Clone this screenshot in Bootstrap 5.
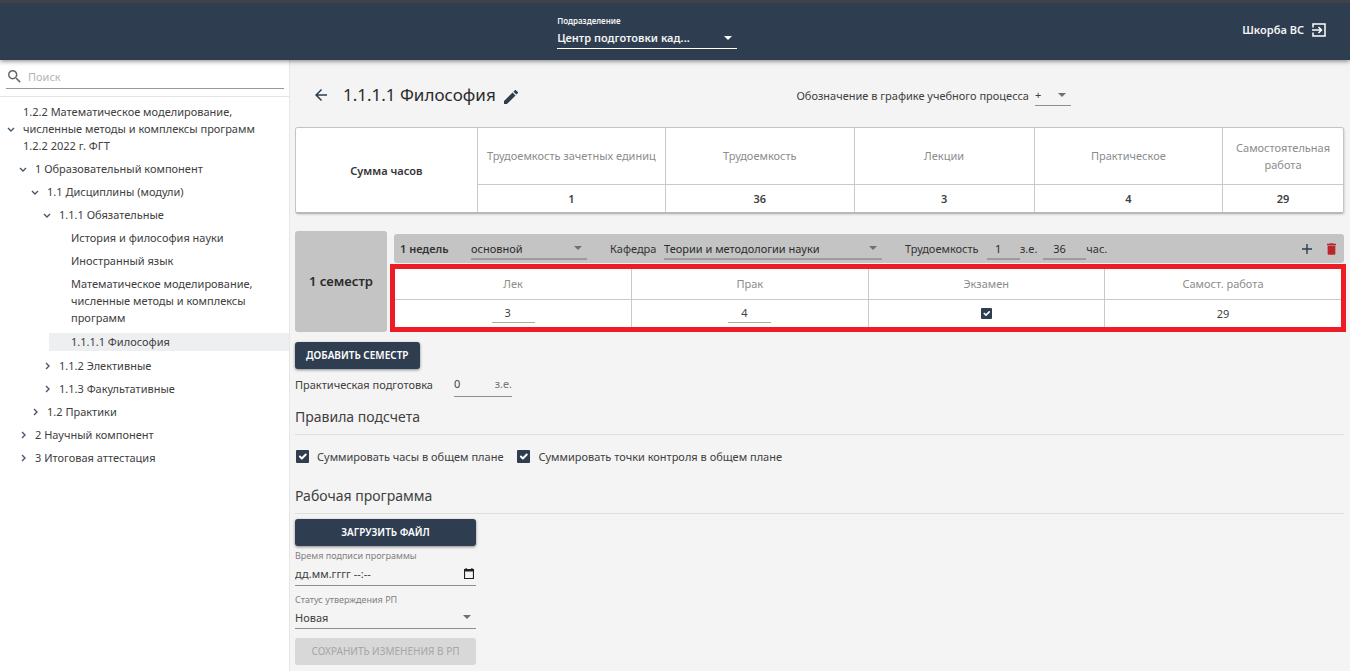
<!DOCTYPE html>
<html lang="ru">
<head>
<meta charset="utf-8">
<meta name="viewport" content="width=device-width, initial-scale=1">
<title>1.1.1.1 Философия</title>
<link href="https://cdn.jsdelivr.net/npm/bootstrap@5.3.0/dist/css/bootstrap.min.css" rel="stylesheet">
<style>
:root{--navy:#2e3e50;--ink:#404040;--rule:#c9c9c9}
body{font-family:"Noto Sans","Open Sans",sans-serif;font-size:11px;line-height:17px;color:var(--ink);background:#f4f4f4}
svg{display:block;fill:currentColor}
.topbar{display:grid;grid-template-columns:10fr 180px 11fr;height:60px;background:var(--navy);border-top:3px solid #404246;color:#f4f4f4;box-shadow:0 1px 5px rgba(0,0,0,.5);position:relative;z-index:2;font-weight:600}
.tiny-label{font-size:9px;line-height:12px;display:block}
.topbar .tiny-label{font-size:8px}
.line-field{border:0;border-bottom:1px solid #8f8f8f;border-radius:0;background-color:transparent;color:inherit;font:inherit;padding:0;outline:0;display:block;min-width:0}
select.line-field{appearance:none;background-repeat:no-repeat;background-position:right 5px center;background-size:8px 4px;background-image:url("data:image/svg+xml,%3Csvg xmlns='http://www.w3.org/2000/svg' viewBox='0 0 8 4'%3E%3Cpath fill='%23707070' d='M0 0h8L4 4z'/%3E%3C/svg%3E")}
.topbar select.line-field{border-color:#fff;height:22px;background-image:url("data:image/svg+xml,%3Csvg xmlns='http://www.w3.org/2000/svg' viewBox='0 0 8 4'%3E%3Cpath fill='white' d='M0 0h8L4 4z'/%3E%3C/svg%3E")}
.topbar option{color:#333}
.shell{min-height:calc(100vh - 60px)}
.side{width:290px;background:#fff;border-right:1px solid #e6e6e6;flex-shrink:0}
.search{height:37px;border-bottom:1px solid #e4e4e4;padding:5px 5px 0 6px}
.search-line{border-bottom:1px solid #999;height:24px;color:#666;padding-left:2px}
.search input{margin-left:7px}
.search input::placeholder{color:#b5b5b5;opacity:1}
.tree ul{list-style:none;margin:0;padding:0 0 0 12px}
.tree>ul{padding:0 0 0 5px}
.node{display:flex;align-items:center;padding:3px 0;color:var(--ink);text-decoration:none}
.node svg{width:12px;height:12px;margin-right:6px;flex-shrink:0;color:#44566a;fill:none;stroke:currentColor;stroke-width:1.4}
.tree>ul>li>.node{padding-top:6px}
.tree .leaves{padding-left:8px}
.tree .leaves .leaf{padding-left:22px;padding-right:20px}
.tree .leaves .current{background:#eeeff1;padding-top:0;padding-bottom:0;margin:4px 0 3px;line-height:18px}
.work{padding:23px 6px 6px 5px;min-width:0}
.title-row{margin-bottom:20px}
.page-title{font-size:17px;line-height:24px;margin:0;font-weight:400;color:#2b2b2b}
.plain{border:0;background:none;padding:0;color:var(--navy)}
.mark-field{padding-right:273px}
.mark-field .line-field{width:36px;height:21px;margin-left:6px}
.grid-table{width:100%;table-layout:fixed;background:#fff;text-align:center;margin:0}
.grid-table th,.grid-table td{border-left:1px solid var(--rule);padding:0 6px;font-weight:400}
.grid-table thead th:not(.lead-cell){color:#8c8c8c;border-bottom:1px solid var(--rule)}
.grid-table tr>:first-child.edge,.grid-table .lead-cell{border-left:0}
.sum{border:1px solid #c4c4c4;border-bottom:2px solid #b9b9b9;border-radius:3px;overflow:hidden;box-shadow:1px 1px 2px rgba(0,0,0,.12)}
.sum thead th{height:56px}
.sum thead td{height:28px;font-weight:600}
.sum .lead-cell{font-weight:600;color:#333}
.sem-row{margin-top:17px}
.sem-name{width:92px;background:#c4c4c4;border-radius:3px;font-size:13px;font-weight:600;color:#2b2b2b;margin-right:7px;flex-shrink:0}
.sem-body{padding-top:3px;min-width:0}
.sem-bar{background:#c4c4c4;height:29px;border-radius:3px;color:#333}
.sem-bar .line-field{height:23px;border-bottom:2px solid #9c9c9c;color:#2b2b2b;padding-top:1px}
.weeks{padding-left:6px;width:77px}
.kind{width:116px}
.dept-label{margin-left:23px;width:54px}
.dept{width:218px}
.work-label{margin-left:23px;width:82px}
.sem-bar .ze{width:33px;padding-left:8px}
.sem-bar .hours{width:43px;padding-left:10px;margin-left:6px}
.trash{margin:0 8px 0 15px}
.marked{border:5px solid #ed1c24;margin:1px -2px 0 -4px}
.marked thead th{height:30px}
.marked td{height:28px;padding:0}
.cell-in{width:43px;height:20px;padding-left:13px;border-color:#aaa}
.form-check-input.tick{width:11px;height:11px;margin:0;border:0;border-radius:1px;float:none;display:block;box-shadow:none}
.form-check-input.tick:checked{background-color:var(--navy)}
.form-check-input.big{width:13px;height:13px}
.act{background:var(--navy);color:#fff;border:0;border-radius:3px;height:27px;font:inherit;font-size:10px;font-weight:600;text-transform:uppercase;padding:0 11px;box-shadow:0 1px 3px rgba(0,0,0,.45)}
.act:disabled{background:#d8d8d8;color:#a6a6a6;box-shadow:none;font-weight:400}
.add{margin-top:10px}
.prep{height:30px}
.prep>label{width:159px}
.prep-box{width:58px;height:26px;border-bottom:1px solid #8f8f8f}
.prep-box input{width:30px}
.prep-box span{color:#777}
.sect{font-size:14px;line-height:20px;font-weight:400;margin:0;padding-bottom:7px;border-bottom:1px solid #dedede}
.checks{padding:13px 0 21px 1px;gap:14px}
.checks label{margin-left:8px}
.prog{width:181px}
.prog .tiny-label{color:#808080}
.load{margin-top:5px}
.date-line{height:24px;border-bottom:1px solid #8f8f8f;padding-right:2px}
.state{height:23px}
.save{margin-top:9px}
</style>
</head>
<body>
<header class="topbar">
  <div></div>
  <div class="pt-2">
    <label class="tiny-label pt-1" for="unit">Подразделение</label>
    <select id="unit" class="line-field w-100 pe-4"><option>Центр подготовки кад...</option></select>
  </div>
  <div class="d-flex align-items-center justify-content-end pe-4 gap-2 pb-1">
    <span>Шкорба ВС</span>
    <button class="plain text-white" aria-label="Выйти"><svg width="14" height="14" viewBox="0 0 14 14" stroke="#fff" stroke-width="1.5" style="fill:none"><path d="M1 4.500V1h12v12H1V9.500M0 7h9M6.500 4 9.500 7l-3 3"/></svg></button>
  </div>
</header>
<div class="d-flex align-items-stretch shell">
  <aside class="side">
    <div class="search">
      <div class="search-line d-flex align-items-center">
        <svg width="13" height="13" viewBox="3 3 18 18"><path d="M15.500 14h-.79l-.28-.27A6.470 6.470 0 0 0 16 9.500 6.500 6.500 0 1 0 9.500 16c1.610 0 3.090-.59 4.230-1.570l.27.28v.79l5 4.990L20.490 19zm-6 0C7.010 14 5 11.990 5 9.500S7.010 5 9.500 5 14 7.010 14 9.500 11.990 14 9.500 14"/></svg>
        <input class="line-field border-0 flex-grow-1" type="search" placeholder="Поиск" aria-label="Поиск">
      </div>
    </div>
    <nav class="tree"><ul>
      <li><a href="#" class="node"><svg viewBox="0 0 12 12"><path d="M3 5l3 3 3-3"/></svg><span>1.2.2 Математическое моделирование,<br>численные методы и комплексы программ<br>1.2.2 2022 г. ФГТ</span></a>
      <ul>
        <li><a href="#" class="node"><svg viewBox="0 0 12 12"><path d="M3 5l3 3 3-3"/></svg>1 Образовательный компонент</a>
        <ul>
          <li><a href="#" class="node"><svg viewBox="0 0 12 12"><path d="M3 5l3 3 3-3"/></svg>1.1 Дисциплины (модули)</a>
          <ul>
            <li><a href="#" class="node"><svg viewBox="0 0 12 12"><path d="M3 5l3 3 3-3"/></svg>1.1.1 Обязательные</a>
            <ul class="leaves">
              <li><a href="#" class="node leaf">История и философия науки</a></li>
              <li><a href="#" class="node leaf">Иностранный язык</a></li>
              <li><a href="#" class="node leaf">Математическое моделирование, численные методы и комплексы программ</a></li>
              <li><a href="#" class="node leaf current">1.1.1.1 Философия</a></li>
            </ul></li>
            <li><a href="#" class="node"><svg viewBox="0 0 12 12"><path d="M5 3l3 3-3 3"/></svg>1.1.2 Элективные</a></li>
            <li><a href="#" class="node"><svg viewBox="0 0 12 12"><path d="M5 3l3 3-3 3"/></svg>1.1.3 Факультативные</a></li>
          </ul></li>
          <li><a href="#" class="node"><svg viewBox="0 0 12 12"><path d="M5 3l3 3-3 3"/></svg>1.2 Практики</a></li>
        </ul></li>
        <li><a href="#" class="node"><svg viewBox="0 0 12 12"><path d="M5 3l3 3-3 3"/></svg>2 Научный компонент</a></li>
        <li><a href="#" class="node"><svg viewBox="0 0 12 12"><path d="M5 3l3 3-3 3"/></svg>3 Итоговая аттестация</a></li>
      </ul></li>
    </ul></nav>
  </aside>
  <main class="work flex-grow-1">
    <div class="row g-0 align-items-center title-row">
      <div class="col d-flex align-items-center ps-3">
        <button class="plain ms-1" aria-label="Назад"><svg width="12" height="12" viewBox="4 4 16 16"><path d="M20 11H7.830l5.590-5.590L12 4l-8 8 8 8 1.410-1.410L7.830 13H20z"/></svg></button>
        <h1 class="page-title ms-3">1.1.1.1 Философия</h1>
        <button class="plain ms-2 pe-1 pt-1" aria-label="Изменить"><svg width="14" height="14" viewBox="3 3 18 18"><path d="M3 17.250V21h3.750L17.810 9.940l-3.750-3.750zM20.710 7.040a1 1 0 0 0 0-1.410l-2.340-2.340a1 1 0 0 0-1.410 0l-1.830 1.830 3.750 3.750z"/></svg></button>
      </div>
      <div class="col-auto d-flex align-items-center mark-field">
        <label for="mark">Обозначение в графике учебного процесса</label>
        <select id="mark" class="line-field"><option>+</option></select>
      </div>
    </div>
    <div class="sum">
      <table class="grid-table">
        <colgroup><col style="width:17.3%"><col style="width:18%"><col style="width:18%"><col style="width:17.2%"><col style="width:18%"><col></colgroup>
        <thead><tr><th rowspan="2" class="lead-cell">Сумма часов</th><th>Трудоемкость зачетных единиц</th><th>Трудоемкость</th><th>Лекции</th><th>Практическое</th><th>Самостоятельная работа</th></tr>
        <tr><td>1</td><td>36</td><td>3</td><td>4</td><td>29</td></tr></thead>
      </table>
    </div>
    <section class="d-flex sem-row">
      <div class="sem-name d-flex align-items-center justify-content-center">1 семестр</div>
      <div class="flex-grow-1 sem-body">
        <div class="sem-bar d-flex align-items-center">
          <b class="fw-semibold weeks">1 недель</b>
          <select class="line-field kind" aria-label="Вид"><option>основной</option></select>
          <label for="dept" class="dept-label">Кафедра</label>
          <select id="dept" class="line-field dept"><option>Теории и методологии науки</option></select>
          <label for="ze" class="work-label">Трудоемкость</label>
          <input id="ze" class="line-field ze" value="1"><span>з.е.</span>
          <input class="line-field hours" value="36" aria-label="Часы"><span>час.</span>
          <button class="plain ms-auto" aria-label="Добавить"><svg width="10" height="10" viewBox="0 0 10 10"><path d="M4.300 0h1.400v4.300H10v1.400H5.700V10H4.300V5.700H0V4.300h4.300z"/></svg></button>
          <button class="plain trash" aria-label="Удалить"><svg width="9" height="12" viewBox="5 3 14 18"><path fill="#b9272c" d="M6 19a2 2 0 0 0 2 2h8a2 2 0 0 0 2-2V7H6zM19 4h-3.500l-1-1h-5l-1 1H5v2h14z"/></svg></button>
        </div>
        <div class="marked">
          <table class="grid-table">
            <thead><tr><th class="edge">Лек</th><th>Прак</th><th>Экзамен</th><th>Самост. работа</th></tr></thead>
            <tbody><tr><td class="edge"><input class="line-field cell-in mx-auto" value="3" aria-label="Лекции"></td><td><input class="line-field cell-in mx-auto" value="4" aria-label="Практика"></td><td><input type="checkbox" class="form-check-input tick mx-auto" checked aria-label="Экзамен"></td><td>29</td></tr></tbody>
          </table>
        </div>
      </div>
    </section>
    <button class="act add">Добавить семестр</button>
    <div class="d-flex align-items-center prep">
      <label for="prep">Практическая подготовка</label>
      <div class="prep-box d-flex align-items-center"><input id="prep" class="line-field border-0 flex-grow-1" value="0"><span>з.е.</span></div>
    </div>
    <h2 class="sect mt-2">Правила подсчета</h2>
    <div class="d-flex checks">
      <div class="d-flex align-items-center"><input type="checkbox" id="c1" class="form-check-input tick big" checked><label for="c1">Суммировать часы в общем плане</label></div>
      <div class="d-flex align-items-center"><input type="checkbox" id="c2" class="form-check-input tick big" checked><label for="c2">Суммировать точки контроля в общем плане</label></div>
    </div>
    <h2 class="sect">Рабочая программа</h2>
    <form class="prog">
      <button type="button" class="act w-100 load">Загрузить файл</button>
      <label class="tiny-label mt-1" for="when">Время подписи программы</label>
      <div class="d-flex align-items-center date-line"><input id="when" class="line-field border-0 flex-grow-1" value="дд.мм.гггг --:--"><svg width="10" height="11" viewBox="0 0 10 11"><path fill="#222" fill-rule="evenodd" d="M1.500 0h1.200v1h4.600V0h1.200v1H10v10H0V1h1.500zM1.100 3.500v6.400h7.800V3.500z"/></svg></div>
      <label class="tiny-label mt-2" for="state">Статус утверждения РП</label>
      <select id="state" class="line-field w-100 state"><option>Новая</option></select>
      <button type="button" class="act w-100 save" disabled>Сохранить изменения в РП</button>
    </form>
  </main>
</div>
<script src="https://cdn.jsdelivr.net/npm/bootstrap@5.3.0/dist/js/bootstrap.bundle.min.js"></script>
</body>
</html>
